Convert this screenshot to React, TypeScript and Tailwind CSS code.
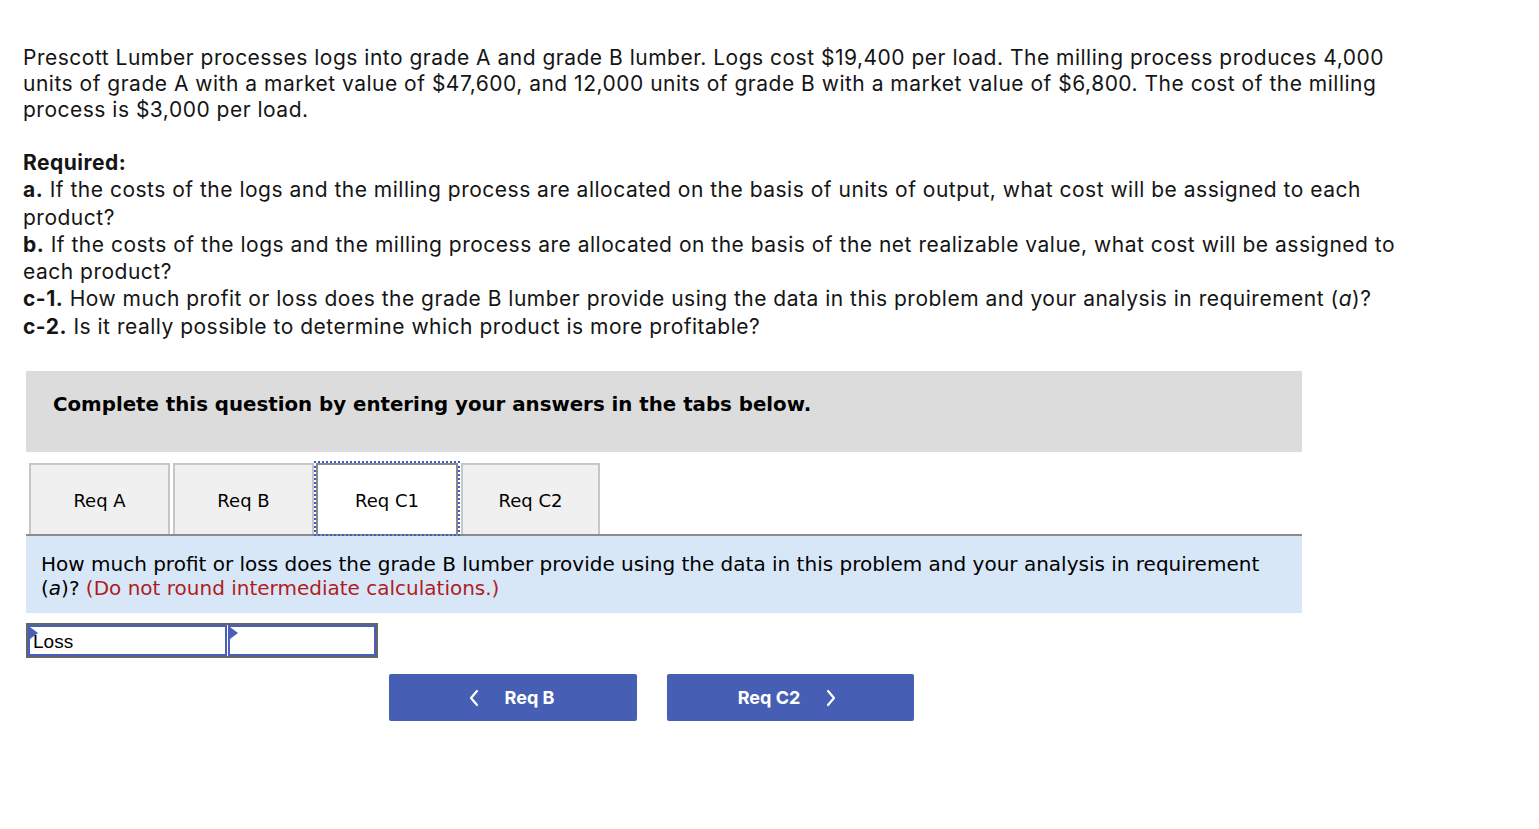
import React from "react";

const sans = { fontFamily: "Inter, 'Open Sans', Arial, sans-serif" };
const verdana = { fontFamily: "'DejaVu Sans', Verdana, sans-serif" };

function Tab({ label, active, w, ml }: { label: string; active?: boolean; w: string; ml: string }) {
  if (active) {
    return (
      <div
        className={`${ml} ${w} flex h-[71px] items-center justify-center border-2 border-b-0 border-[#8a8a8a] bg-white pt-[2px] text-[18px] text-black outline-2 outline-dotted outline-[#3f5bc8]`}
        style={verdana}
      >
        {label}
      </div>
    );
  }
  return (
    <div
      className={`${ml} ${w} flex h-[71px] items-center justify-center border-2 border-b-0 border-[#c6c6c6] bg-[#f0f0f0] pt-[2px] text-[18px] text-black`}
      style={verdana}
    >
      {label}
    </div>
  );
}

function Cell({ w, text }: { w: string; text?: string }) {
  return (
    <div className={`relative h-full border-2 border-[#4a5fb8] bg-white ${w}`}>
      <div className="absolute left-0 top-0 h-0 w-0 border-y-[6px] border-l-[8px] border-y-transparent border-l-[#4a5fb8]" />
      {text && (
        <span
          className="absolute left-[3px] top-[4px] text-[19px] leading-[22px] text-black"
          style={{ fontFamily: "'Liberation Sans', Arial, sans-serif" }}
        >
          {text}
        </span>
      )}
    </div>
  );
}

export default function App() {
  return (
    <div className="min-h-[829px] bg-white pt-[45px] text-[#151515]">
      <div className="w-[1438px] pl-[23px] text-[21px] leading-[26px] tracking-[0.5px]" style={sans}>
        <p>
          Prescott Lumber processes logs into grade A and grade B lumber. Logs cost $19,400 per load. The milling process produces 4,000 units of grade A with a market value of $47,600, and 12,000 units of grade B with a market value of $6,800. The cost of the milling process is $3,000 per load.
        </p>
        <div className="mt-[26px] leading-[27.3px]">
          <p className="font-bold">Required:</p>
          <p>
            <b>a.</b> If the costs of the logs and the milling process are allocated on the basis of units of output, what cost will be assigned to each product?
          </p>
          <p>
            <b>b.</b> If the costs of the logs and the milling process are allocated on the basis of the net realizable value, what cost will be assigned to each product?
          </p>
          <p>
            <b>c-1.</b> How much profit or loss does the grade B lumber provide using the data in this problem and your analysis in requirement (<i>a</i>)?
          </p>
          <p>
            <b>c-2.</b> Is it really possible to determine which product is more profitable?
          </p>
        </div>
      </div>

      <div className="ml-[26px] mt-[31px] w-[1276px]">
        <div className="h-[81px] bg-[#dcdcdc] pl-[27px] pt-[22px]">
          <p className="text-[19.8px] font-bold leading-[24px] text-black" style={verdana}>
            Complete this question by entering your answers in the tabs below.
          </p>
        </div>

        <div className="mt-[11px] flex items-end border-b-2 border-[#8c8c8c]">
          <Tab label="Req A" ml="ml-[3px]" w="w-[141px]" />
          <Tab label="Req B" ml="ml-[3px]" w="w-[141px]" />
          <Tab label="Req C1" ml="ml-[2px]" w="w-[142px]" active />
          <Tab label="Req C2" ml="ml-[3px]" w="w-[139px]" />
        </div>

        <div className="bg-[#d7e7f8] pb-[13px] pl-[15px] pr-[20px] pt-[16px] text-[20px] leading-[24px] text-black" style={verdana}>
          How much profit or loss does the grade B lumber provide using the data in this problem and your analysis in requirement (<i>a</i>)?{" "}
          <span className="text-[#b01c1c]">(Do not round intermediate calculations.)</span>
        </div>

        <div className="mt-[10px] flex h-[35px] w-[352px] border-2 border-[#666666]">
          <Cell w="w-[199px]" text="Loss" />
          <Cell w="flex-1 ml-[1px]" />
        </div>

        <div className="ml-[363px] mt-[16px] flex gap-[30px]" style={sans}>
          <button className="flex h-[47px] w-[248px] items-center justify-center gap-[25px] rounded-[2px] bg-[#465fb4] pr-[4px] text-[18px] font-bold text-white">
            <svg width="12" height="18" viewBox="0 0 12 18" fill="none" stroke="white" strokeWidth="2.2" strokeLinecap="round" strokeLinejoin="round">
              <path d="M9 2 L3 9 L9 16" />
            </svg>
            <span>Req B</span>
          </button>
          <button className="flex h-[47px] w-[247px] items-center justify-center gap-[25px] rounded-[2px] bg-[#465fb4] pr-[6px] text-[18px] font-bold text-white">
            <span>Req C2</span>
            <svg width="12" height="18" viewBox="0 0 12 18" fill="none" stroke="white" strokeWidth="2.2" strokeLinecap="round" strokeLinejoin="round">
              <path d="M3 2 L9 9 L3 16" />
            </svg>
          </button>
        </div>
      </div>
    </div>
  );
}
